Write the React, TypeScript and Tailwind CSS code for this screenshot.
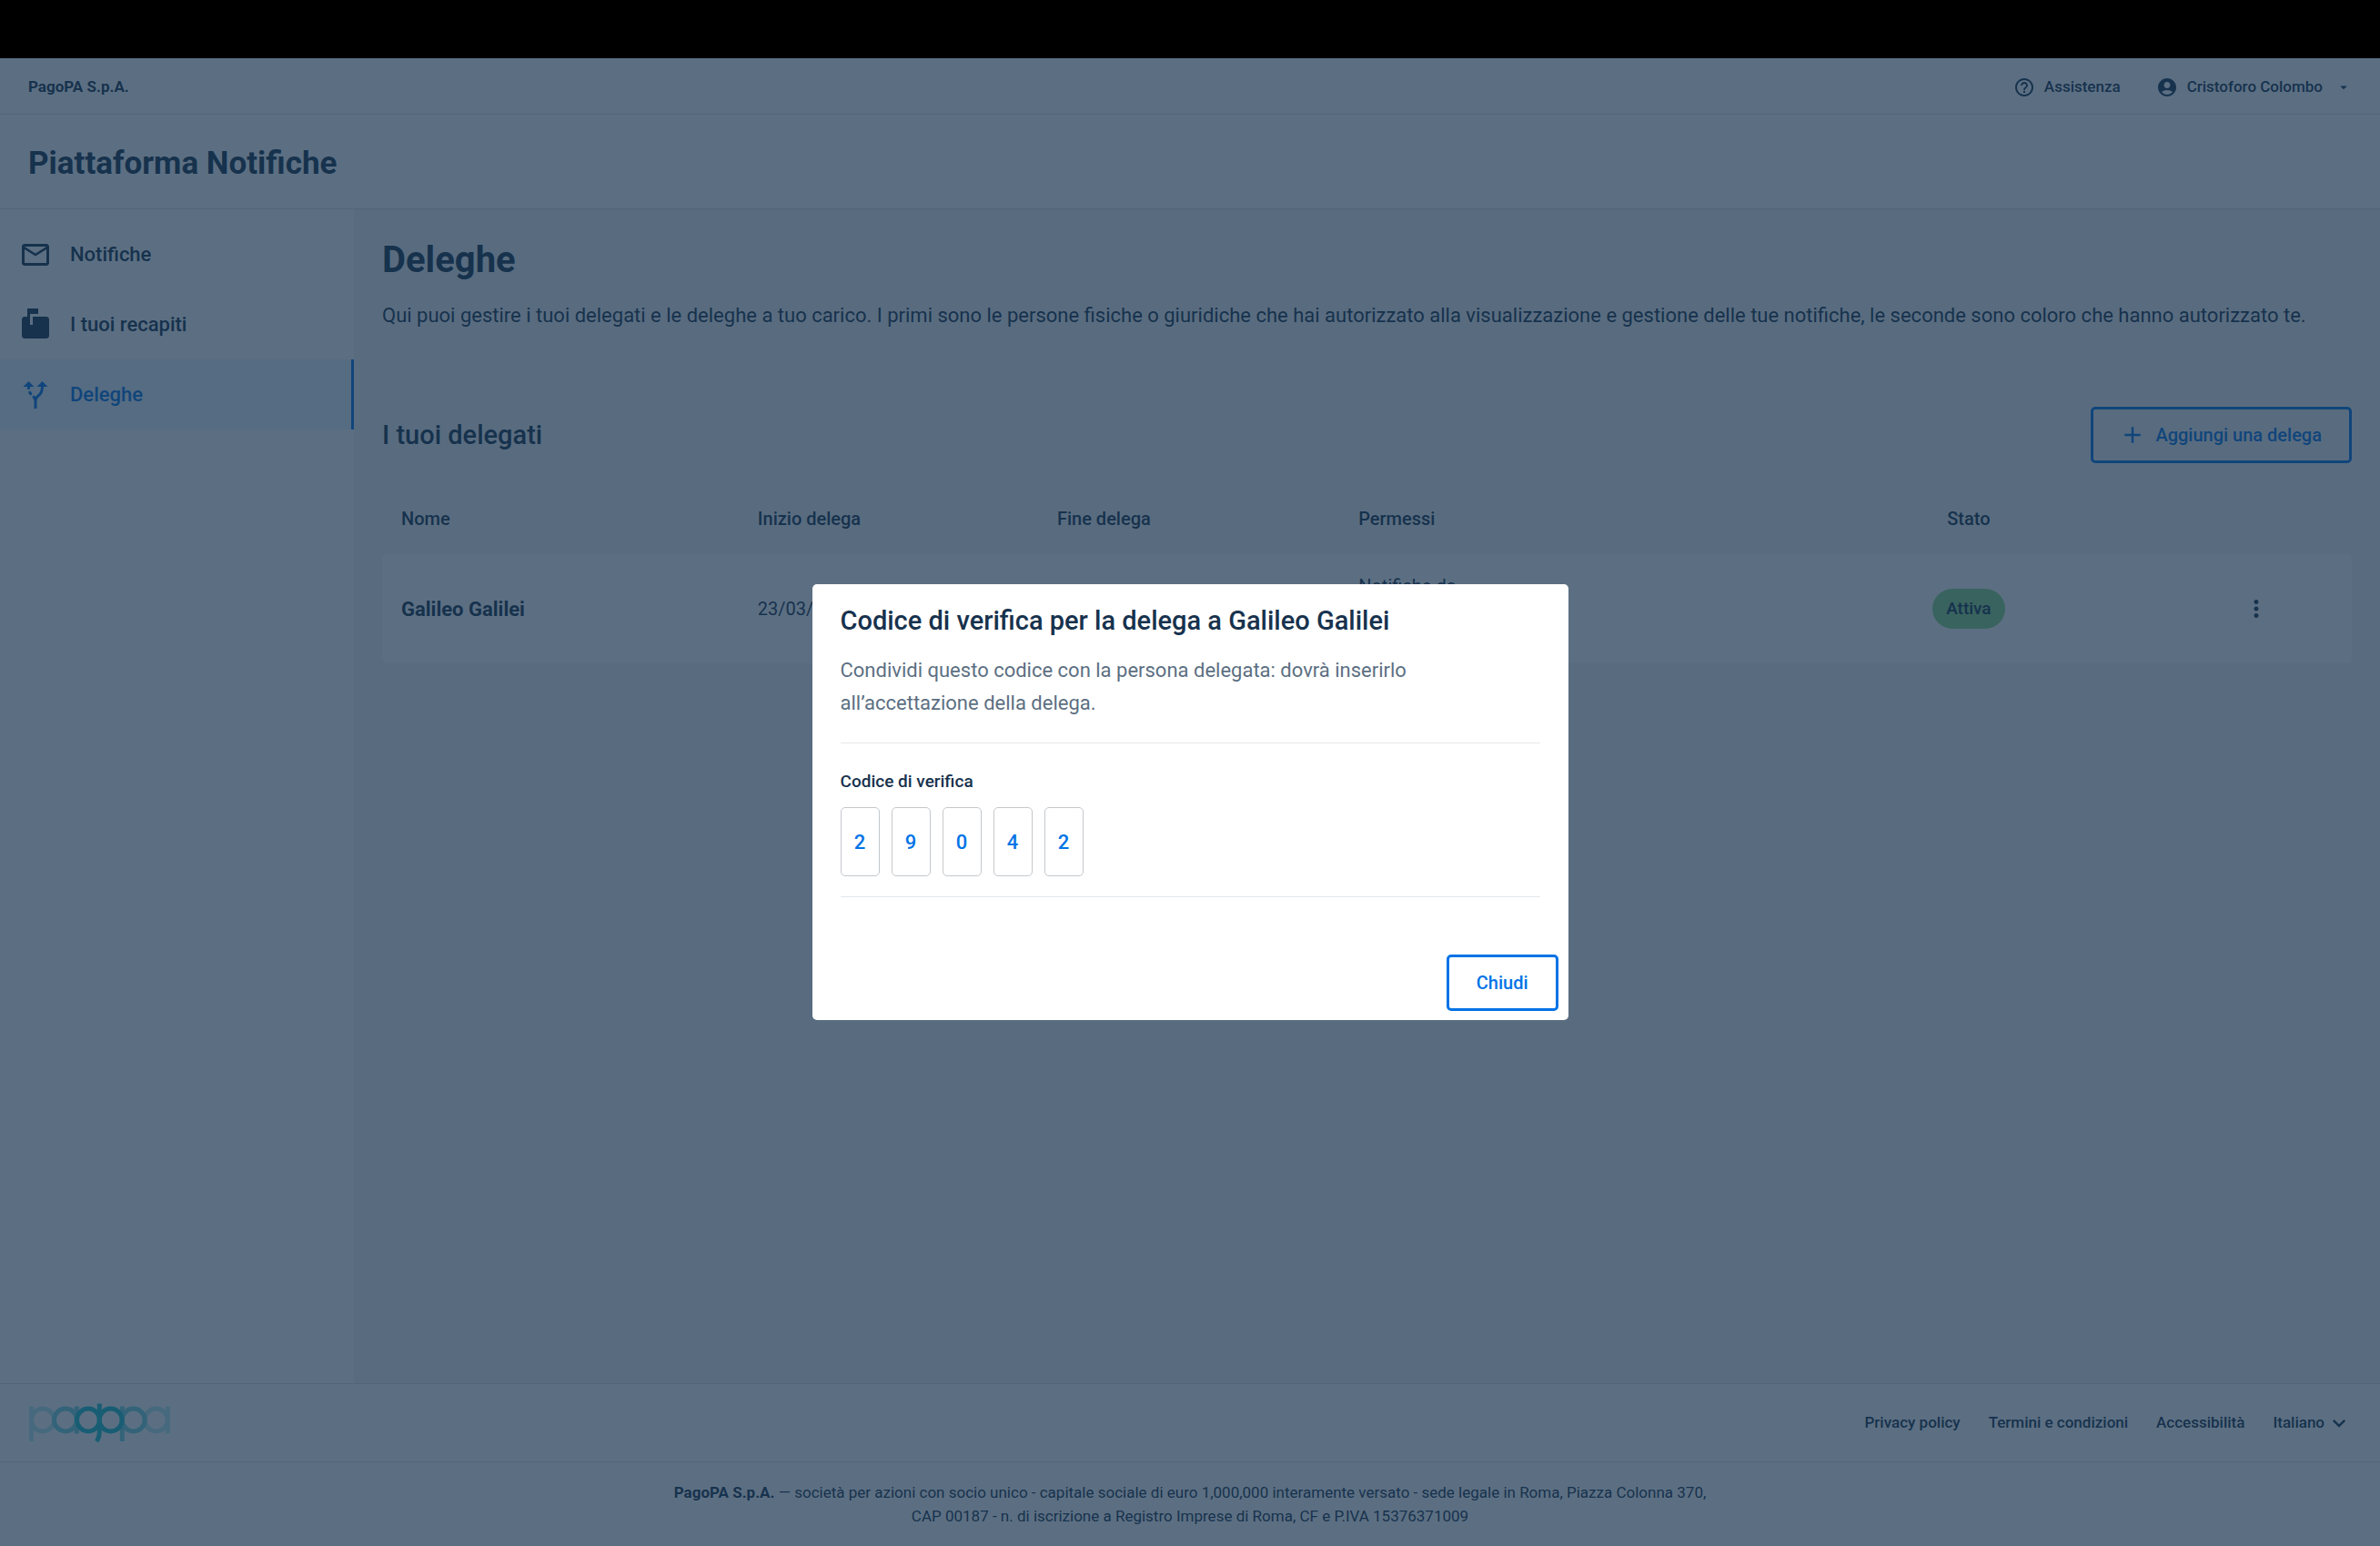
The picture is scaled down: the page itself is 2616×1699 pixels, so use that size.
import type { ReactNode } from "react";
import {
  MdAccountCircle,
  MdAdd,
  MdAltRoute,
  MdArrowDropDown,
  MdHelpOutline,
  MdKeyboardArrowDown,
  MdMailOutline,
  MdMarkunreadMailbox,
  MdMoreVert,
} from "react-icons/md";

function PagoPaLogo() {
  return (
    <svg width="156" height="44" viewBox="30 1540 156 44" fill="none" strokeWidth="5" role="img" aria-label="PagoPA">
      <g stroke="#b9eaf0">
        <circle cx="46" cy="1558.5" r="12.5" />
        <path d="M33.5 1543.5V1582" />
        <circle cx="170.7" cy="1558.5" r="12.5" />
        <path d="M183.3 1543.5V1573.5" />
      </g>
      <g stroke="#77d5df">
        <path d="M83.3 1543.5V1573.5" />
        <circle cx="71" cy="1558.5" r="12.5" />
        <path d="M133.3 1543.5V1582" />
        <circle cx="145.7" cy="1558.5" r="12.5" />
      </g>
      <g stroke="#1cc4cf">
        <circle cx="96" cy="1558.5" r="12.5" />
        <circle cx="120.7" cy="1558.5" r="12.5" />
        <path d="M108.3 1540.5V1571C108.3 1576 107.5 1579 105 1582" />
      </g>
    </svg>
  );
}

function NavItem({ icon, label, active = false }: { icon: ReactNode; label: string; active?: boolean }) {
  return (
    <a
      href="#"
      aria-current={active ? "page" : undefined}
      className={
        active
          ? "flex h-[77px] items-center gap-5 border-r-[3px] border-[#0073e6] bg-[#ebf4fd] pl-[21px] text-[22px] font-medium text-[#0073e6]"
          : "flex h-[77px] items-center gap-5 pl-[21px] text-[22px] font-medium"
      }
    >
      {icon}
      {label}
    </a>
  );
}

function Header() {
  return (
    <header className="bg-white">
      <div className="flex h-[62px] items-center justify-between border-b border-[#d8dde2] px-[31px] pt-0.5 text-[17px]">
        <a href="#" className="font-bold">PagoPA S.p.A.</a>
        <div className="flex items-center gap-[39px] font-medium">
          <button type="button" className="flex items-center gap-[10px]">
            <MdHelpOutline size={24} />
            Assistenza
          </button>
          <button type="button" className="flex items-center gap-[10px]">
            <MdAccountCircle size={24} />
            Cristoforo Colombo
            <MdArrowDropDown size={18} className="ml-1" />
          </button>
        </div>
      </div>
      <div className="flex h-[104px] items-center border-b border-[#d8dde2] px-[31px] pt-1">
        <p className="text-[35px] leading-[40px] font-bold">Piattaforma Notifiche</p>
      </div>
    </header>
  );
}

function Sidebar() {
  return (
    <nav className="w-[389px] shrink-0 bg-white pt-[11px]">
      <NavItem icon={<MdMailOutline size={36} />} label="Notifiche" />
      <NavItem icon={<MdMarkunreadMailbox size={36} />} label="I tuoi recapiti" />
      <NavItem icon={<MdAltRoute size={36} />} label="Deleghe" active />
    </nav>
  );
}

function DelegatesTable() {
  return (
    <table className="w-full table-fixed text-left text-[20px]">
      <colgroup>
        <col className="w-[18.1%]" />
        <col className="w-[15.2%]" />
        <col className="w-[15.3%]" />
        <col className="w-[22.2%]" />
        <col className="w-[19.5%]" />
        <col />
      </colgroup>
      <thead>
        <tr className="h-[78px]">
          <th scope="col" className="pl-[21px] font-medium">Nome</th>
          <th scope="col" className="pl-[21px] font-medium">Inizio delega</th>
          <th scope="col" className="pl-[21px] font-medium">Fine delega</th>
          <th scope="col" className="pl-[21px] font-medium">Permessi</th>
          <th scope="col" className="text-center font-medium">Stato</th>
          <td />
        </tr>
      </thead>
      <tbody>
        <tr className="h-[120px]">
          <td className="rounded-l-[5px] bg-white pl-[21px] text-[22px] font-bold">Galileo Galilei</td>
          <td className="bg-white pl-[21px]">23/03/</td>
          <td className="bg-white" />
          <td className="bg-white pt-[22px] pl-[21px] align-top leading-[26px]">Notifiche da</td>
          <td className="bg-white text-center">
            <span className="inline-flex h-11 items-center rounded-full bg-[#89d589] px-[15px] text-[19px] font-medium">
              Attiva
            </span>
          </td>
          <td className="rounded-r-[5px] bg-white">
            <button type="button" aria-label="Altre azioni" className="mx-auto flex">
              <MdMoreVert size={30} />
            </button>
          </td>
        </tr>
      </tbody>
    </table>
  );
}

function Footer() {
  return (
    <footer className="bg-white text-[17px]">
      <div className="flex h-[87px] items-center justify-between border-y border-[#d8dde2] px-[31px]">
        <PagoPaLogo />
        <div className="flex items-center gap-[31px] font-medium">
          <a href="#">Privacy policy</a>
          <a href="#">Termini e condizioni</a>
          <a href="#">Accessibilità</a>
          <button type="button" className="flex items-center gap-0.5">
            Italiano
            <MdKeyboardArrowDown size={28} />
          </button>
        </div>
      </div>
      <p className="mx-auto max-w-[1180px] py-5 text-center leading-[26px]">
        <strong className="font-bold">PagoPA S.p.A.</strong> — società per azioni con socio unico - capitale sociale di
        euro 1,000,000 interamente versato - sede legale in Roma, Piazza Colonna 370,
        <br />
        CAP 00187 - n. di iscrizione a Registro Imprese di Roma, CF e P.IVA 15376371009
      </p>
    </footer>
  );
}

function CodeDialog() {
  const digits = ["2", "9", "0", "4", "2"];
  return (
    <div className="fixed inset-x-0 top-16 bottom-0 flex items-center justify-center bg-[#17324d]/70">
      <div
        role="dialog"
        aria-modal="true"
        aria-labelledby="dialog-title"
        className="w-[831px] max-w-full rounded-[5px] bg-white pt-5 pb-[10px]"
      >
        <div className="px-[31px]">
          <h2 id="dialog-title" className="text-[29px] leading-[40px] font-medium">
            Codice di verifica per la delega a Galileo Galilei
          </h2>
          <p className="mt-[17px] max-w-[680px] text-[22px] leading-[36px] text-[#5c6f82]">
            Condividi questo codice con la persona delegata: dovrà inserirlo all’accettazione della delega.
          </p>
          <hr className="mt-[25px] border-[#e3e7eb]" />
          <p id="code-label" className="mt-7 text-[19px] leading-7 font-medium">Codice di verifica</p>
          <div role="group" aria-labelledby="code-label" className="mt-[14px] flex gap-[13px]">
            {digits.map((digit, i) => (
              <input
                key={i}
                readOnly
                value={digit}
                aria-label={`Cifra ${i + 1}`}
                className="h-[76px] w-[43px] rounded-[5px] border border-[#c4c8cc] text-center text-[22px] font-medium text-[#0073e6]"
              />
            ))}
          </div>
          <hr className="mt-[22px] border-[#e3e7eb]" />
        </div>
        <div className="mt-[63px] flex justify-end px-[11px]">
          <button
            type="button"
            className="h-[62px] rounded-[5px] border-[3px] border-[#0073e6] px-[30px] text-[20px] font-medium text-[#0073e6]"
          >
            Chiudi
          </button>
        </div>
      </div>
    </div>
  );
}

export default function App() {
  return (
    <div className="flex min-h-screen flex-col bg-[#f5f5f5] font-['Roboto',sans-serif] text-[#17324d]">
      <div className="h-16 bg-black" />
      <Header />
      <div className="flex flex-1">
        <Sidebar />
        <main className="min-w-0 flex-1 px-[31px] pt-8">
          <h1 className="text-[40px] leading-[48px] font-bold">Deleghe</h1>
          <p className="mt-[19px] text-[22px] leading-[36px]">
            Qui puoi gestire i tuoi delegati e le deleghe a tuo carico. I primi sono le persone fisiche o giuridiche che
            hai autorizzato alla visualizzazione e gestione delle tue notifiche, le seconde sono coloro che hanno
            autorizzato te.
          </p>
          <div className="mt-[82px] mb-[22px] flex items-center justify-between">
            <h2 className="text-[29px] leading-[40px] font-medium">I tuoi delegati</h2>
            <button
              type="button"
              className="flex h-[62px] items-center gap-[10px] rounded-[5px] border-[3px] border-[#0073e6] pr-[30px] pl-7 text-[20px] font-medium text-[#0073e6]"
            >
              <MdAdd size={30} />
              Aggiungi una delega
            </button>
          </div>
          <DelegatesTable />
        </main>
      </div>
      <Footer />
      <CodeDialog />
    </div>
  );
}
